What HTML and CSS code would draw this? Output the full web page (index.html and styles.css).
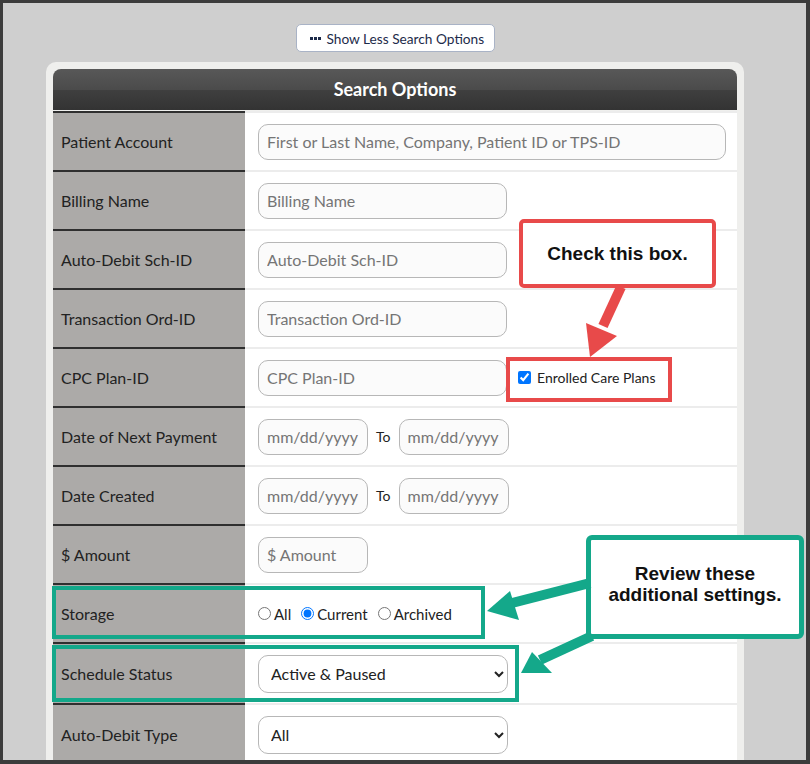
FILE: index.html
```html
<!DOCTYPE html>
<html lang="en">
<head>
  <meta charset="UTF-8"/>
  <title>Auto-Debit Search</title>
  <link rel="stylesheet" href="styles.css">
</head>
<body>

<div class="frame">
  <div class="page">
    <div class="toggle-wrap">
      <button class="toggle-btn"><span class="dots"><i></i><i></i><i></i></span>Show Less Search Options</button>
    </div>

    <div class="panel">
      <div class="panel-head">Search Options</div>

      <div class="row">
        <div class="lbl">Patient Account</div>
        <div class="fld"><input class="txt wide" placeholder="First or Last Name, Company, Patient ID or TPS-ID"></div>
      </div>
      <div class="row">
        <div class="lbl">Billing Name</div>
        <div class="fld"><input class="txt" placeholder="Billing Name"></div>
      </div>
      <div class="row">
        <div class="lbl">Auto-Debit Sch-ID</div>
        <div class="fld"><input class="txt" placeholder="Auto-Debit Sch-ID"></div>
      </div>
      <div class="row">
        <div class="lbl">Transaction Ord-ID</div>
        <div class="fld"><input class="txt" placeholder="Transaction Ord-ID"></div>
      </div>
      <div class="row">
        <div class="lbl">CPC Plan-ID</div>
        <div class="fld">
          <input class="txt" placeholder="CPC Plan-ID">
          <label class="check"><input type="checkbox" checked> Enrolled Care Plans</label>
        </div>
      </div>
      <div class="row">
        <div class="lbl">Date of Next Payment</div>
        <div class="fld">
          <input class="txt short" placeholder="mm/dd/yyyy">
          <span class="to">To</span>
          <input class="txt short" placeholder="mm/dd/yyyy">
        </div>
      </div>
      <div class="row">
        <div class="lbl">Date Created</div>
        <div class="fld">
          <input class="txt short" placeholder="mm/dd/yyyy">
          <span class="to">To</span>
          <input class="txt short" placeholder="mm/dd/yyyy">
        </div>
      </div>
      <div class="row">
        <div class="lbl">$ Amount</div>
        <div class="fld"><input class="txt short" placeholder="$ Amount"></div>
      </div>
      <div class="row">
        <div class="lbl">Storage</div>
        <div class="fld radios">
          <label><input type="radio" name="storage">All</label>
          <label><input type="radio" name="storage" checked>Current</label>
          <label><input type="radio" name="storage">Archived</label>
        </div>
      </div>
      <div class="row tall">
        <div class="lbl">Schedule Status</div>
        <div class="fld">
          <select class="sel">
            <option>Active &amp; Paused</option>
            <option>Active</option>
            <option>Paused</option>
          </select>
        </div>
      </div>
      <div class="row tall">
        <div class="lbl">Auto-Debit Type</div>
        <div class="fld">
          <select class="sel">
            <option>All</option>
          </select>
        </div>
      </div>
    </div>
  </div>

  <!-- callouts -->
  <div class="note note-red">Check this box.</div>
  <div class="mark mark-red"></div>
  <div class="note note-green">Review these<br>additional settings.</div>
  <div class="mark mark-green storage-mark"></div>
  <div class="mark mark-green status-mark"></div>

  <svg class="arrows" width="810" height="764" viewBox="0 0 810 764">
    <!-- red: note to checkbox -->
    <line x1="621" y1="287" x2="603" y2="326" stroke="#e84a4a" stroke-width="10"/>
    <polygon points="586,323 617,336 590,357" fill="#e84a4a"/>
    <!-- green: note to storage -->
    <line x1="590" y1="583" x2="512" y2="603" stroke="#14a88a" stroke-width="10"/>
    <polygon points="510,591 519,620 487,611" fill="#14a88a"/>
    <!-- green: note to status -->
    <line x1="592" y1="636" x2="540" y2="660" stroke="#14a88a" stroke-width="10"/>
    <polygon points="532,652 552,673 521,673" fill="#14a88a"/>
  </svg>
</div>

</body>
</html>
```

FILE: styles.css
```css
* {
  margin: 0; padding: 0; box-sizing: border-box;
}
body {
  position: relative;
  font-family: Lato, 'Open Sans', sans-serif;
  color: #222;
}
.frame {
  height: 764px;
  overflow: hidden;
  background: #cfcfcf;
  border: 3px solid #3c3c3c;
  border-right-width: 4px;
  border-bottom-width: 4px;
}
.page {
  width: 698px;
  margin-left: 43px;
}
.toggle-wrap {
  display: flex;
  justify-content: center;
  padding-top: 21px;
}
.toggle-btn {
  display: flex;
  align-items: center;
  gap: 6px;
  height: 28px;
  width: 199px;
  padding-left: 13px;
  background: #fff;
  border: 1px solid #a9b3c6;
  border-radius: 5px;
  font-family: Lato, sans-serif;
  font-size: 13.7px;
  color: #1d2b4a;
}
.dots {
  display: flex;
  gap: 1px;
}
.dots i {
  width: 3px;
  height: 3px;
  background: #1d2b4a;
}
.panel {
  margin-top: 10px;
  background: #efefed;
  border-radius: 10px 10px 0 0;
  padding: 7px 7px 0;
}
.panel-head {
  height: 41px;
  line-height: 41px;
  text-align: center;
  color: #fff;
  font-weight: bold;
  font-size: 18px;
  border-radius: 8px 8px 0 0;
  background: linear-gradient(#585858, #4b4b4b 50%, #3f3f3f 52%, #333);
  margin-bottom: 1px;
}
.row {
  display: grid;
  grid-template-columns: 192px 1fr;
  height: 59px;
}
.row.tall {
  height: 61px;
}
.lbl {
  display: flex;
  align-items: center;
  padding-left: 8px;
  background: #acaaa8;
  border-top: 2px solid #2f2f2f;
  font-size: 16px;
}
.fld {
  display: flex;
  align-items: center;
  padding-left: 13px;
  background: #fff;
  border-top: 2px solid #ececec;
}
.txt {
  width: 249px;
  height: 36px;
  padding-left: 8px;
  border: 1px solid #b7b7b7;
  border-radius: 10px;
  background: #fbfbfb;
  font-family: Lato, sans-serif;
  font-size: 16px;
  color: #222;
}
.txt::placeholder {
  color: #757575;
}
.txt.wide { width: 468px; }
.txt.short { width: 110px; }
.to {
  margin: 0 8px;
  font-size: 14px;
}
.check {
  display: flex;
  align-items: center;
  gap: 6px;
  margin-left: 11px;
  font-size: 14px;
}
.check input {
  width: 13px;
  height: 13px;
  margin: 0;
}
.radios {
  gap: 10px;
  font-size: 15px;
}
.radios label {
  display: flex;
  align-items: center;
  gap: 3px;
}
.radios input {
  width: 13px;
  height: 13px;
  margin: 0;
}
.sel {
  width: 250px;
  height: 38px;
  padding-left: 8px;
  border: 1px solid #b7b7b7;
  border-radius: 10px;
  background: #fff;
  font-family: Lato, sans-serif;
  font-size: 16px;
  color: #222;
}

/* callouts laid over the form */
.note {
  position: absolute;
  display: flex;
  align-items: center;
  justify-content: center;
  text-align: center;
  background: #fff;
  font-family: 'Liberation Sans', Arial, sans-serif;
  font-weight: bold;
  font-size: 19px;
  line-height: 21px;
  color: #111;
}
.note-red {
  left: 519px; top: 219px;
  width: 197px; height: 69px;
  border: 4px solid #e84a4a;
  border-radius: 5px;
}
.note-green {
  left: 586px; top: 535px;
  width: 218px; height: 104px;
  border: 5px solid #14a88a;
  border-radius: 6px;
  padding-bottom: 6px;
}
.mark {
  position: absolute;
}
.mark-red {
  left: 506px; top: 357px;
  width: 166px; height: 45px;
  border: 4px solid #e84a4a;
}
.mark-green {
  border: 4px solid #14a88a;
}
.storage-mark {
  left: 52px; top: 586px;
  width: 433px; height: 53px;
}
.status-mark {
  left: 52px; top: 645px;
  width: 467px; height: 57px;
}
.arrows {
  position: absolute;
  left: 0; top: 0;
}
```
